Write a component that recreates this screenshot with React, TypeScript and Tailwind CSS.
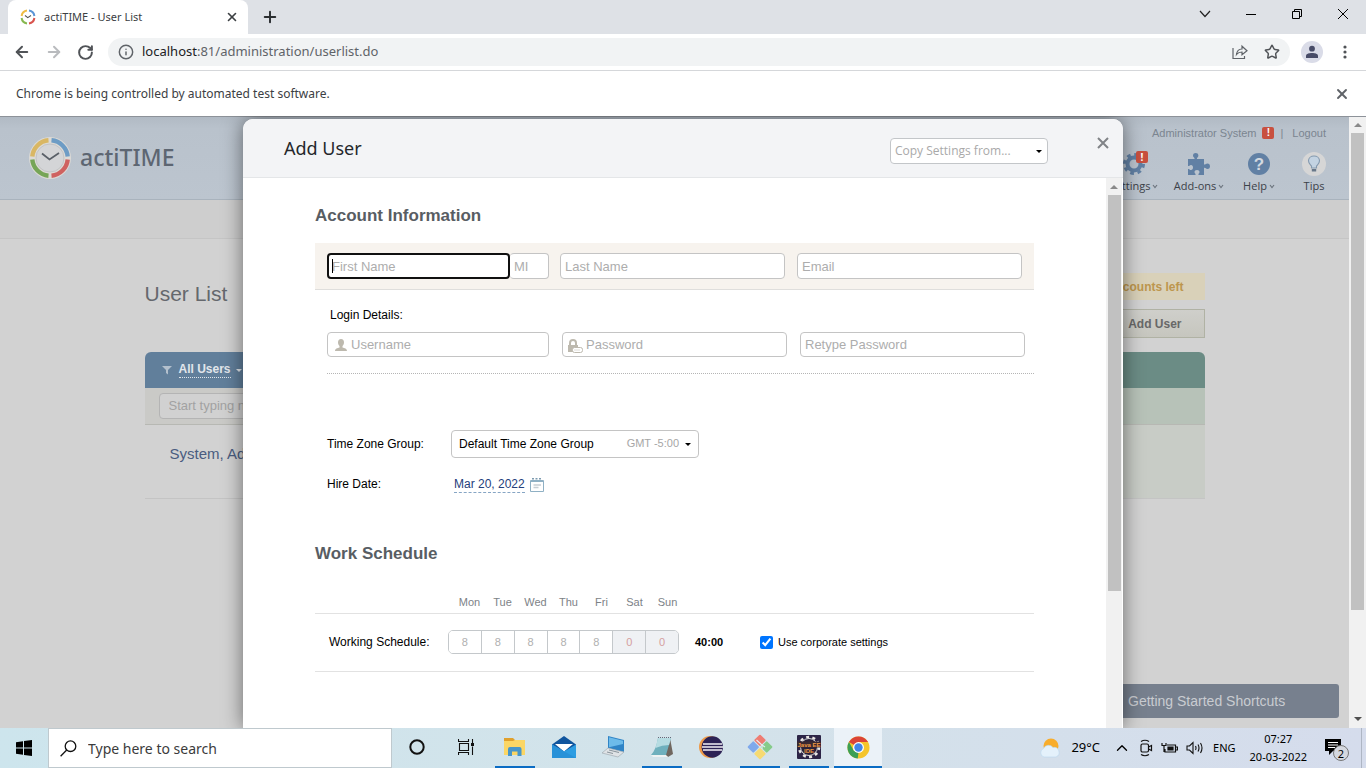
import React from "react";
import {
  ArrowLeft, ArrowRight, RotateCw, Info, Star, X, Plus, ChevronDown, ChevronUp,
} from "lucide-react";

const SANS = "font-['Liberation_Sans',Arial,sans-serif]";
const UI = "font-['Noto_Sans','Open_Sans',sans-serif]";

function ClockMark({ className }: { className: string }) {
  return (
    <svg viewBox="0 0 44 44" className={className} aria-hidden="true">
      <circle cx="22" cy="22" r="21" fill="#dcdad6" />
      <g fill="none" strokeWidth="4.4">
        <path d="M23.5 4.3A17.8 17.8 0 0 1 39.7 20.5" stroke="#6d9cc5" />
        <path d="M39.7 23.5A17.8 17.8 0 0 1 23.5 39.7" stroke="#cf6260" />
        <path d="M20.5 39.7A17.8 17.8 0 0 1 4.3 23.5" stroke="#76a557" />
        <path d="M4.3 20.5A17.8 17.8 0 0 1 20.5 4.3" stroke="#d9b764" />
      </g>
      <circle cx="22" cy="22" r="14" fill="#d4d5d7" stroke="#c3c4c6" strokeWidth="1" />
      <path d="M14 17.5L21.5 23.5L31 17" fill="none" stroke="#5a6068" strokeWidth="1.8" />
    </svg>
  );
}

function TabIcon() {
  return (
    <svg viewBox="0 0 16 16" className="size-4" aria-hidden="true">
      <g fill="none" strokeWidth="2">
        <path d="M9 1.6A6.4 6.4 0 0 1 14.4 7" stroke="#5b95d6" />
        <path d="M14.4 9A6.4 6.4 0 0 1 9 14.400" stroke="#d9544e" />
        <path d="M7 14.4A6.4 6.4 0 0 1 1.600 9" stroke="#86b84f" />
        <path d="M1.6 7A6.4 6.4 0 0 1 7 1.600" stroke="#efbd45" />
      </g>
      <path d="M5 6.5L7.800 8.600L11 6.500" fill="none" stroke="#555" strokeWidth="1.100" />
    </svg>
  );
}

function Caret({ className = "" }: { className?: string }) {
  return (
    <svg viewBox="0 0 6 3" className={`h-[3px] w-[6px] ${className}`} aria-hidden="true">
      <path d="M0 0H6L3 3Z" fill="currentColor" />
    </svg>
  );
}

function ScrollArrow({ up = false, className = "" }: { up?: boolean; className?: string }) {
  return (
    <svg viewBox="0 0 8 4" className={`h-[4px] w-[8px] ${className}`} aria-hidden="true">
      <path d={up ? "M0 4H8L4 0Z" : "M0 0H8L4 4Z"} fill="currentColor" />
    </svg>
  );
}

function Alert() {
  return (
    <span className="flex h-3 w-3 items-center justify-center rounded-xs bg-[#c8503f] text-[10px] leading-none font-bold text-white">
      !
    </span>
  );
}

function BrowserChrome() {
  return (
    <header className={`shrink-0 ${UI}`}>
      <div className="flex h-[34px] bg-[#dee1e6] pl-2">
        <div className="flex w-[240px] items-center rounded-t-lg bg-white pr-[9px] pl-3">
          <TabIcon />
          <span className="ml-2 flex-1 text-[11px] text-[#3c4043]">actiTIME - User List</span>
          <button aria-label="Close tab" className="text-[#3c4043]"><X size={14} strokeWidth={2.8} /></button>
        </div>
        <button aria-label="New tab" className="ml-[13px] text-[#2b2e31]"><Plus size={18} strokeWidth={2.6} /></button>
        <div className="ml-auto flex h-7 text-black">
          <button aria-label="Search tabs" className="flex w-[46px] items-center justify-center">
            <svg viewBox="0 0 12 8" className="h-2 w-3"><path d="M1 1L6 6.500L11 1" fill="none" stroke="#222" strokeWidth="1.200" /></svg>
          </button>
          <button aria-label="Minimize" className="flex w-[46px] items-center justify-center">
            <svg viewBox="0 0 10 10" className="size-[10px]"><path d="M0 5.500H10" stroke="#000" /></svg>
          </button>
          <button aria-label="Restore" className="flex w-[46px] items-center justify-center">
            <svg viewBox="0 0 10 10" className="size-[10px]" fill="none" stroke="#000"><path d="M.5 2.500H7.500V9.500H.5ZM2.500 2.500V.5H9.500V7.500H7.500" /></svg>
          </button>
          <button aria-label="Close window" className="flex w-[46px] items-center justify-center">
            <svg viewBox="0 0 10 10" className="size-[10px]"><path d="M0 0L10 10M10 0L0 10" stroke="#000" /></svg>
          </button>
        </div>
      </div>
      <div className="flex h-9 items-center bg-white pr-[19px] pl-[13px]">
        <button aria-label="Back" className="text-[#505357]"><ArrowLeft size={18} strokeWidth={2.6} /></button>
        <button aria-label="Forward" className="ml-[14px] text-[#b9bbbe]"><ArrowRight size={18} strokeWidth={2.6} /></button>
        <button aria-label="Reload" className="ml-[14px] text-[#505357]"><RotateCw size={17} strokeWidth={2.8} /></button>
        <div className="ml-[14px] flex h-7 flex-1 items-center rounded-full bg-[#f1f3f4] px-[10px]">
          <Info size={16} strokeWidth={2.2} className="shrink-0 text-[#5f6368]" />
          <div role="textbox" aria-label="Address" className="ml-2 flex-1 text-[13px] text-[#5f6368]">
            <span className="text-[#202124]">localhost</span>:81/administration/userlist.do
          </div>
          <button aria-label="Share">
            <svg viewBox="0 0 16 16" className="size-4" fill="none" stroke="#5f6368" strokeWidth="1.200">
              <path d="M1 4V14.500H12.500V12M4.500 10.500C5 6.500 7.500 5 10 5V2.200L15 6.700L10 10.800V8C7.500 8 6 8.600 4.500 10.500Z" />
            </svg>
          </button>
          <button aria-label="Bookmark" className="ml-4 text-[#505357]"><Star size={16} strokeWidth={2.2} /></button>
        </div>
        <button aria-label="Profile" className="ml-[11px] flex size-[22px] items-center justify-center rounded-full bg-[#dadce8]">
          <svg viewBox="0 0 14 14" className="size-[14px]" fill="#484c68"><circle cx="7" cy="3.700" r="2.900" /><path d="M1 13V11C1 8.800 4 8 7 8S13 8.800 13 11V13Z" /></svg>
        </button>
        <button aria-label="Menu" className="ml-5 flex w-[4px] justify-center">
          <svg viewBox="0 0 4 14" className="h-[14px] w-[4px]" fill="#505357"><circle cx="2" cy="2" r="1.600" /><circle cx="2" cy="7" r="1.600" /><circle cx="2" cy="12" r="1.600" /></svg>
        </button>
      </div>
      <div className="flex h-[46px] items-center justify-between border-t border-[#d5d7da] bg-white px-4 text-[12px] text-[#3c4043]">
        <span>Chrome is being controlled by automated test software.</span>
        <button aria-label="Dismiss" className="text-[#5f6368]"><X size={16} strokeWidth={2.8} /></button>
      </div>
    </header>
  );
}

function NavItem({ label, caret = true, className, children }: { label: string; caret?: boolean; className: string; children: React.ReactNode }) {
  return (
    <a href="#" className={`flex flex-col items-center ${className}`}>
      <span className="relative flex h-[26px] items-center justify-center">{children}</span>
      <span className="mt-px flex items-center gap-[2px] text-[11px] leading-4 text-[#3c4249]">
        {label}
        {caret && <svg viewBox="0 0 6 5" className="h-[5px] w-[6px]" fill="none"><path d="M1 1L3 3.500L5 1" stroke="#6c757e" strokeWidth="1.200" /></svg>}
      </span>
    </a>
  );
}

function AppPage() {
  return (
    <div className={`flex h-full bg-[#d2d2d2] ${SANS}`}>
      <div className="min-w-0 flex-1">
        <div className="flex h-[84px] justify-between border-b border-[#a9b3bd] bg-linear-to-b from-[#b0b9c3] via-[#b9c2cc] via-15% to-[#bcc5cf]">
          <div className="flex items-center gap-[8px] pl-7">
            <ClockMark className="size-11" />
            <span className={`text-[23px] font-medium text-[#5d6672] ${UI}`}>actiTIME</span>
          </div>
          <div className="flex flex-col items-end pt-[9px] pr-2">
            <div className="mr-[15px] flex h-4 items-center text-[11px] text-[#7b8590]">
              <a href="#">Administrator System</a>
              <span className="ml-[6px]"><Alert /></span>
              <span className="ml-[6px]">|</span>
              <a href="#" className="ml-[9px]">Logout</a>
            </div>
            <nav className="mt-[10px] flex font-['Open_Sans','Noto_Sans',sans-serif]">
              <NavItem label="Settings" className="w-[66px]">
                <svg viewBox="0 0 24 24" className="size-6" fill="none" stroke="#6180a4">
                  <circle cx="12" cy="12" r="6.500" strokeWidth="4" />
                  <circle cx="12" cy="12" r="9.500" strokeWidth="3" strokeDasharray="3.730 3.730" />
                </svg>
                <span className="absolute top-0 -right-[2px]"><Alert /></span>
              </NavItem>
              <NavItem label="Add-ons" className="w-[64px]">
                <svg viewBox="0 0 24 24" className="size-6" fill="#6180a4">
                  <path d="M1 7H7.500C8 5.500 6 5.500 6 3.500C6 1.800 7.300 1 8.700 1S11.400 1.800 11.400 3.500C11.400 5.500 9.500 5.500 10 7H17V12.500C18.500 13 18.500 11.500 20.500 11.500C22.200 11.500 23 12.800 23 14.200S22.200 17 20.500 17C18.500 17 18.500 15.300 17 16V23H11.500C11 21.500 12.500 21.500 12.500 20C12.500 18.700 11.500 18 10 18S7.500 18.700 7.500 20C7.500 21.500 9 21.500 8.500 23H1V17C2.500 16.500 2.500 18 4 18C5.300 18 6 17 6 15.500S5.300 13 4 13C2.500 13 2.500 14.500 1 14Z" />
                </svg>
              </NavItem>
              <NavItem label="Help" className="w-[56px]">
                <span className="flex size-[22px] items-center justify-center rounded-full bg-[#6180a4] font-['Liberation_Sans',sans-serif] text-[17px] leading-none font-bold text-[#d3d9e0]">?</span>
              </NavItem>
              <NavItem label="Tips" caret={false} className="w-[54px]">
                <svg viewBox="0 0 24 24" className="size-6">
                  <circle cx="12" cy="12" r="12" fill="#d6d6d6" />
                  <path d="M9.500 16V14C8.500 12.500 6.500 11.500 6.500 8.800C6.500 6 9 4 12 4S17.500 6 17.500 8.800C17.500 11.500 15.500 12.500 14.500 14V16Z" fill="#c3d3e2" stroke="#8499ae" strokeWidth="1.100" />
                  <path d="M9.800 17H14.200V19.500H9.800Z" fill="#68788a" />
                </svg>
              </NavItem>
            </nav>
          </div>
        </div>
        <div className="h-[39px] border-b border-[#c5c5c5] bg-[#cecece]" />
        <main className="mx-auto w-full max-w-[1060px]">
          <div className="flex items-start justify-between pt-[34px]">
            <h1 className="pt-[7px] text-[21px] leading-7 text-[#65686d]">User List</h1>
            <div className="flex flex-col items-stretch">
              <p className="flex h-[27px] items-center justify-end bg-[#d9d1b9] pr-[21px] pl-4 text-[12px] font-bold text-[#bd964e]">accounts left</p>
              <button className="mt-[9px] flex h-[29px] items-center justify-end border border-[#b0b2a4] bg-linear-to-b from-[#cfcfcb] to-[#c6c6be] pr-[22px] text-[12px] font-bold text-[#686868]">Add User</button>
            </div>
          </div>
          <table className="mt-[14px] w-full table-fixed border-collapse text-left">
            <thead>
              <tr className="h-9">
                <th className="rounded-tl-md bg-[#617f9b] p-0 pl-4">
                  <button className="flex items-center text-[12px] font-bold text-[#e1e6eb]">
                    <svg viewBox="0 0 12 10" className="h-[10px] w-3" fill="#b3c0cd"><path d="M1 1H11L7 5V9.500L5 8V5Z" /></svg>
                    <span className="ml-[6px] border-b border-dotted border-[#e1e6eb] leading-[15px]">All Users</span>
                    <Caret className="ml-[5px]" />
                  </button>
                </th>
                <th className="w-[160px] rounded-tr-md bg-[#6b8c85] p-0" aria-label="Actions" />
              </tr>
            </thead>
            <tbody>
              <tr className="h-9 border-b border-[#b7b8b3]">
                <td className="bg-[#cacac7] p-0 pl-[14px]">
                  <input aria-label="Find user" placeholder="Start typing name" className="block h-[26px] w-[240px] rounded-sm border border-[#b4b4b4] bg-[#d1d1d1] px-[9px] text-[13px] placeholder:text-[#a2a2a2]" />
                </td>
                <td className="bg-[#b7c2b8] p-0" />
              </tr>
              <tr className="h-[74px] border-b border-[#c4c4c4]">
                <td className="p-0 pb-[14px] pl-[25px] text-[15px] text-[#4a5c80]"><a href="#">System, Administrator</a></td>
                <td className="bg-[#c8ccc6] p-0" />
              </tr>
            </tbody>
          </table>
        </main>
      </div>
      <div className="flex w-[17px] shrink-0 flex-col items-center bg-[#f1f1f1] py-[7px]">
        <ScrollArrow up className="shrink-0 text-[#8a8a8a]" />
        <div className="mt-[6px] h-[477px] w-[13px] bg-[#c1c1c1]" />
        <ScrollArrow className="mt-auto shrink-0 text-[#505050]" />
      </div>
    </div>
  );
}

const field = "min-w-0 rounded-[4px] border border-[#c4c4c4] bg-white px-1 text-[13px] text-black placeholder:text-[#adadad]";

const days = [
  { day: "Mon", hours: "8" }, { day: "Tue", hours: "8" }, { day: "Wed", hours: "8" }, { day: "Thu", hours: "8" },
  { day: "Fri", hours: "8" }, { day: "Sat", hours: "0" }, { day: "Sun", hours: "0" },
];

function AddUserDialog() {
  return (
    <section role="dialog" aria-labelledby="dialog-title" className={`flex h-full w-[880px] flex-col overflow-hidden rounded-t-[10px] bg-white text-[12px] text-black shadow-[0_0_20px_rgba(0,0,0,0.5)] ${SANS}`}>
      <div className={`flex h-[59px] shrink-0 items-center border-b border-[#e4e6e8] bg-[#f3f4f6] pr-[14px] pl-[41px] ${UI}`}>
        <h2 id="dialog-title" className="text-[18px] text-[#24272b]">Add User</h2>
        <div className="relative mt-[5px] ml-auto">
          <select aria-label="Copy Settings from" className="block h-[26px] w-[158px] appearance-none rounded-[4px] border border-[#c3c6c9] bg-white px-1 font-['Open_Sans','Noto_Sans',sans-serif] text-[12px] text-[#a9a9a9]">
            <option>Copy Settings from...</option>
          </select>
          <Caret className="pointer-events-none absolute top-3 right-[6px] text-black" />
        </div>
        <button aria-label="Close dialog" className="-mt-[10px] ml-[49px]">
          <svg viewBox="0 0 12 12" className="size-3"><path d="M1 1L11 11M11 1L1 11" stroke="#808387" strokeWidth="2" /></svg>
        </button>
      </div>
      <div className="flex min-h-0 flex-1">
        <form className="min-w-0 flex-1 px-[72px]">
          <h3 className="mt-[26px] text-[17px] leading-6 font-bold text-[#585d63]">Account Information</h3>
          <div className="mt-[15px] flex border-b border-[#dfdedc] bg-[#f7f3ee] px-3 py-[10px]">
            <div className="relative flex">
              <input aria-label="First Name" placeholder="First Name" className="h-[26px] w-[183px] rounded-[4px] border-2 border-[#101010] bg-white px-[3px] text-[13px] placeholder:text-[#adadad]" />
              <span className="absolute top-[6px] left-[5px] h-[14px] w-px bg-black" />
            </div>
            <input aria-label="Middle Initial" placeholder="MI" className={`h-[26px] w-[39px] border-l-0 ${field}`} />
            <input aria-label="Last Name" placeholder="Last Name" className={`ml-[11px] h-[26px] flex-1 ${field}`} />
            <input aria-label="Email" type="email" placeholder="Email" className={`ml-3 h-[26px] flex-1 ${field}`} />
          </div>
          <p className="mt-4 ml-[15px] leading-[18px]">Login Details:</p>
          <div className="mt-2 ml-3 border-b border-dotted border-[#b5b5b5] pr-[9px] pb-4">
            <div className="flex gap-[13px]">
              <div className="relative flex w-[222px]">
                <input aria-label="Username" placeholder="Username" className={`h-[25px] flex-1 pl-[23px] ${field}`} />
                <svg viewBox="0 0 12 12" className="absolute top-[7px] left-2 size-3" fill="#bdb9ae"><path d="M6 0C8 0 9 1.500 9 3.500C9 5.500 8 6.500 7.500 7V8.500C9.500 9.200 12 9.500 12 12H0C0 9.500 2.500 9.200 4.500 8.500V7C4 6.500 3 5.500 3 3.500C3 1.500 4 0 6 0Z" /></svg>
              </div>
              <div className="relative flex flex-1">
                <input aria-label="Password" type="password" placeholder="Password" className={`h-[25px] flex-1 pl-[23px] ${field}`} />
                <svg viewBox="0 0 16 14" className="absolute top-[7px] left-[5px] h-[14px] w-4"><path d="M3 6V4A3 3 0 0 1 9 4V6" fill="none" stroke="#bdb9ae" strokeWidth="2" /><path d="M1 6H11V13H1Z" fill="#bdb9ae" /><rect x="5.500" y="8.500" width="10" height="5" rx="2" fill="#fff" stroke="#bdb9ae" /><path d="M7.500 11H13.500" stroke="#bdb9ae" strokeDasharray="1 1" /></svg>
              </div>
              <div className="flex flex-1">
                <input aria-label="Retype Password" type="password" placeholder="Retype Password" className={`h-[25px] flex-1 ${field}`} />
              </div>
            </div>
          </div>
          <div className="mt-14 ml-3 flex items-center">
            <label htmlFor="timezone" className="w-[124px]">Time Zone Group:</label>
            <div className="relative">
              <select id="timezone" className="block h-7 w-[248px] appearance-none rounded-[4px] border border-[#c4c4c4] bg-white pl-[7px] text-[12px]">
                <option>Default Time Zone Group</option>
              </select>
              <span className="pointer-events-none absolute top-0 right-[20px] text-[11px] leading-[26px] text-[#a6a6a6]">GMT -5:00</span>
              <Caret className="pointer-events-none absolute top-[13px] right-[8px]" />
            </div>
          </div>
          <div className="mt-[17px] ml-3 flex items-center">
            <span className="w-[127px]">Hire Date:</span>
            <button type="button" className="flex items-center gap-[5px] pt-[2px] text-[#24407c]">
              <span className="border-b border-dashed border-[#86a5c4] leading-[15px]">Mar 20, 2022</span>
              <svg viewBox="0 0 14 14" className="size-[14px]" fill="none" stroke="#8fb0c4"><path d="M.5 2.500H13.500V13.500H.5Z" /><path d="M1 3H13" strokeWidth="2" /><path d="M2 .8H12" strokeDasharray="2 1.500" strokeWidth="1.500" stroke="#7d9bb0" /><path d="M3.500 7H11M3.500 9.500H8.500" stroke="#c7ced4" strokeWidth="1.500" /></svg>
            </button>
          </div>
          <h3 className="mt-[49px] text-[17px] leading-6 font-bold text-[#585d63]">Work Schedule</h3>
          <table className="mt-[25px] w-full table-fixed border-collapse">
            <thead>
              <tr className="h-[22px] border-b border-[#e2e2e2] align-middle text-[11px] text-[#7d8287]">
                <td className="w-[133px] p-0" />
                {days.map((d) => <th key={d.day} scope="col" className="w-[33px] p-0 pl-[10px] text-center font-normal">{d.day}</th>)}
                <td className="p-0" />
              </tr>
            </thead>
            <tbody>
              <tr className="h-[58px] border-b border-[#e2e2e2]">
                <th scope="row" className="p-0 pl-[14px] text-left font-normal">Working Schedule:</th>
                <td colSpan={7} className="p-0">
                  <div className="flex h-6 overflow-hidden rounded-[5px] border border-[#c4c8cb]">
                    {days.map((d) => (
                      <input key={d.day} aria-label={`${d.day} hours`} defaultValue={d.hours} readOnly
                        className={`min-w-0 flex-1 border-r border-[#c4c8cb] text-center text-[11px] last:border-r-0 ${d.hours === "0" ? "bg-[#eff1f4] text-[#d5a0a0]" : "bg-white text-[#b0b0b0]"}`} />
                    ))}
                  </div>
                </td>
                <td className="p-0 pl-4">
                  <div className="flex items-center text-[11px]">
                    <b className="w-[65px]">40:00</b>
                    <label className="flex items-center gap-[5px]"><input type="checkbox" defaultChecked className="size-[13px]" />Use corporate settings</label>
                  </div>
                </td>
              </tr>
            </tbody>
          </table>
        </form>
        <div className="flex w-[17px] shrink-0 flex-col items-center border-r border-white bg-[#f1f1f1] pt-[7px]">
          <ScrollArrow up className="shrink-0 text-[#8a8a8a]" />
          <div className="mt-[6px] h-[396px] w-[13px] bg-[#c1c1c1]" />
        </div>
      </div>
    </section>
  );
}

function TaskButton({ label, open = false, active = false, children }: { label: string; open?: boolean; active?: boolean; children: React.ReactNode }) {
  return (
    <button aria-label={label} className={`flex h-10 w-12 flex-col items-center ${active ? "bg-[#ebf2f8]" : ""}`}>
      <span className="flex h-[38px] items-center justify-center">{children}</span>
      {open && <span className={`h-[2px] bg-[#0a6cc4] ${active ? "w-full" : "w-10"}`} />}
    </button>
  );
}

function Taskbar() {
  return (
    <footer className={`flex h-10 shrink-0 bg-linear-to-r from-[#cde5ed] via-[#d3e3ea] to-[#d5dcec] text-black ${UI}`}>
      <button aria-label="Start" className="flex w-12 items-center justify-center">
        <svg viewBox="0 0 16 16" className="size-4"><path d="M0 2.300L7 1.300V7.600H0ZM8 1.100L16 0V7.600H8ZM0 8.400H7V14.700L0 13.700ZM8 8.400H16V16L8 14.900Z" /></svg>
      </button>
      <label className="flex w-[344px] items-center border border-[#bfc9ce] bg-white pl-[11px]">
        <svg viewBox="0 0 17 17" className="size-[17px]" fill="none" stroke="#111" strokeWidth="1.300"><circle cx="10.500" cy="6.200" r="5.300" /><path d="M6.700 10L.6 16.200" /></svg>
        <input type="text" placeholder="Type here to search" aria-label="Type here to search" className="ml-[11px] min-w-0 flex-1 bg-transparent text-[14px] placeholder:text-[#3b3b3b]" />
      </label>
      <div className="flex gap-px pl-px">
        <TaskButton label="Cortana"><svg viewBox="0 0 16 16" className="size-4"><circle cx="8" cy="8" r="6.700" fill="none" stroke="#111" strokeWidth="2" /></svg></TaskButton>
        <TaskButton label="Task View"><svg viewBox="0 0 16 16" className="size-4" fill="none" stroke="#111" strokeWidth="1.100"><path d="M.5 0V2.500H10.500V0M.5 16V13.500H10.500V16M1.500 4.500H10.500V11.500H1.500ZM14.500 0V4M14.500 7.500V16" /><path d="M13 4H16V7H13Z" fill="#111" stroke="none" /></svg></TaskButton>
        <TaskButton label="File Explorer" open>
          <svg viewBox="0 0 22 20" className="h-5 w-[22px]"><path d="M0 1H9L11 3H21V18H0Z" fill="#e0a02c" /><path d="M0 4H9L11 3H21V18H0Z" fill="#fbd665" /><path d="M4 19V12Q4 10 6 10H15.500Q17.500 10 17.500 12V19H13.500V14.500H8V19Z" fill="#4796ca" /></svg>
        </TaskButton>
        <TaskButton label="Mail">
          <svg viewBox="0 0 24 24" className="size-6"><path d="M0 9.500L12 1L24 9.500V16H0Z" fill="#10559e" /><path d="M3 9H21L12 16.500Z" fill="#fff" /><path d="M0 9.500L12 16.500L24 9.500V23H0Z" fill="#2d9de2" /><path d="M0 9.500L24 23H0Z" fill="#2791d8" /></svg>
        </TaskButton>
        <TaskButton label="Remote Desktop">
          <svg viewBox="0 0 24 24" className="size-6"><path d="M7 1L23 5V17L7 13Z" fill="#2f84c6" /><path d="M8 2.300L22 5.800V9L8 12.200Z" fill="#6dbbea" /><path d="M7 13L23 17L17 22L1 18Z" fill="#dfe3e6" stroke="#99a3aa" strokeWidth=".6" /><path d="M8 15L18 17.500M6 17L12 18.500" stroke="#89949b" strokeWidth="1" /></svg>
        </TaskButton>
        <TaskButton label="Notepad" open>
          <svg viewBox="0 0 24 24" className="size-6"><path d="M20 3L23 19L18 22L15 20Z" fill="#70675f" /><path d="M8 3H21L16 20H1Q6 15 8 3Z" fill="#6fb0bd" /><path d="M8 3H21L19 10Q12 10 5.500 13Z" fill="#b6dce2" /><path d="M1 20H16L18 22H3Z" fill="#eef2f2" /><path d="M8 2.500H21" stroke="#667" strokeDasharray="1 1" /></svg>
        </TaskButton>
        <TaskButton label="Eclipse">
          <svg viewBox="0 0 24 24" className="size-6"><circle cx="11" cy="12" r="11" fill="#ee9a48" /><circle cx="13.300" cy="12" r="10.700" fill="#2c2255" /><path d="M4 9H23M3 12H24M4 15H23" stroke="#f2f1f6" strokeWidth="1.700" /></svg>
        </TaskButton>
        <TaskButton label="Git" open>
          <svg viewBox="0 0 26 26" className="size-[26px]"><g transform="rotate(45 13 13)"><rect x="4" y="4" width="8.500" height="8.500" rx="1" fill="#ef7c72" /><rect x="13.500" y="4" width="8.500" height="8.500" rx="1" fill="#86cc8a" /><rect x="4" y="13.500" width="8.500" height="8.500" rx="1" fill="#7fa9ec" /><rect x="13.500" y="13.500" width="8.500" height="8.500" rx="1" fill="#f6da72" /></g><path d="M9.500 6L15 11V15M15 11L18 13" stroke="#e4ecf1" strokeWidth="1.200" fill="none" /></svg>
        </TaskButton>
        <TaskButton label="Java EE IDE" open>
          <svg viewBox="0 0 24 24" className="size-6"><rect width="24" height="24" rx="1" fill="#2c2446" /><circle cx="12" cy="12" r="10" fill="none" stroke="#ebe8e4" strokeWidth="2.500" strokeDasharray="3 3.280" /><circle cx="12" cy="12" r="8.500" fill="#292139" stroke="#ddd" strokeWidth="1" /><rect y="6.500" width="24" height="6" fill="#3a2830" /><text x="12" y="11.500" textAnchor="middle" fontSize="6" fontWeight="bold" fill="#f09a42" fontFamily="Liberation Sans">Java EE</text><text x="12" y="17.500" textAnchor="middle" fontSize="6" fontWeight="bold" fill="#f09a42" fontFamily="Liberation Sans">IDE</text></svg>
        </TaskButton>
        <TaskButton label="Chrome" open active>
          <svg viewBox="0 0 24 24" className="size-[23px]"><circle cx="12" cy="12" r="11.500" fill="#f5c52c" /><path d="M12 12L2 6.300A11.500 11.500 0 0 1 22 6.300H12Z" fill="#db4437" /><path d="M2 6.300L7 15L12 17.300L11.200 23.500A11.500 11.500 0 0 1 2 6.300Z" fill="#3c9f55" /><circle cx="12" cy="12" r="5.700" fill="#fff" /><circle cx="12" cy="12" r="4.400" fill="#4285e8" /></svg>
        </TaskButton>
      </div>
      <div className="ml-auto flex items-center text-[12px]">
        <svg viewBox="0 0 22 20" className="h-5 w-[22px]"><circle cx="12" cy="8" r="7.500" fill="#f8ad2c" /><path d="M5 19A4.500 4.500 0 0 1 4.500 10.500A5.500 5.500 0 0 1 14 9.500A5 5 0 0 1 17 19Z" fill="#e4f1fb" stroke="#b9d7ee" strokeWidth=".6" /></svg>
        <span className="ml-[10px] text-[13px]">29°C</span>
        <ChevronUp size={18} strokeWidth={1.8} className="ml-[13px]" />
        <svg viewBox="0 0 14 18" className="ml-2 h-[18px] w-[14px]" fill="none" stroke="#111" strokeWidth="1.200"><rect x="2" y="5" width="7.500" height="8" rx="1.500" /><path d="M9.500 8L12.500 6.500V11.500L9.500 10M2 2.500Q6 0 10 2.500M2 15.500Q6 18 10 15.500" /></svg>
        <svg viewBox="0 0 17 12" className="ml-2 h-3 w-[17px]" fill="none" stroke="#111" strokeWidth="1.200"><path d="M6 3H14.500V10H4V7M14.500 5H16.500V8H14.500M1 1V3.500H5V1M3 3.500V10" /><path d="M7 5H12V8H7Z" fill="#111" /></svg>
        <svg viewBox="0 0 18 14" className="ml-2 h-[14px] w-[18px]" fill="none" stroke="#111" strokeWidth="1.100"><path d="M1 5H3.500L7 1.500V12.500L3.500 9H1ZM9.500 5Q10.500 7 9.500 9M12 3.500Q14 7 12 10.500M14.500 2Q17.500 7 14.500 12" /></svg>
        <span className="ml-[9px] text-[11px]">ENG</span>
        <time className="ml-[14px] flex flex-col items-center text-[11px] leading-[18px]"><span>07:27</span><span>20-03-2022</span></time>
        <button aria-label="Notifications, 2 new" className="relative ml-[18px] h-6 w-6">
          <svg viewBox="0 0 16 16" className="absolute top-[3px] left-0 size-4"><path d="M0 0H16V12H8L4 16V12H0Z" /><path d="M3 3.500H13M3 6H13M3 8.500H10" stroke="#fff" /></svg>
          <span className="absolute right-0 -bottom-px flex size-4 items-center justify-center rounded-full border border-[#777] bg-[#d5d8df] text-[11px] leading-none">2</span>
        </button>
        <span className="ml-3 h-full w-[5px] border-l border-[#aeb6c4]" />
      </div>
    </footer>
  );
}

export default function App() {
  return (
    <div className="flex h-screen flex-col overflow-hidden">
      <BrowserChrome />
      <div className="relative min-h-0 flex-1 overflow-hidden">
        <AppPage />
        <button className={`absolute right-[27px] bottom-[10px] h-[34px] w-[240px] rounded-[3px] bg-[#77808e] pl-[29px] text-left text-[14px] text-[#c9ccd1] ${SANS}`}>Getting Started Shortcuts</button>
        <div className="absolute inset-0 flex justify-center border-t border-[#8d9299] pt-[2px]">
          <AddUserDialog />
        </div>
      </div>
      <Taskbar />
    </div>
  );
}
